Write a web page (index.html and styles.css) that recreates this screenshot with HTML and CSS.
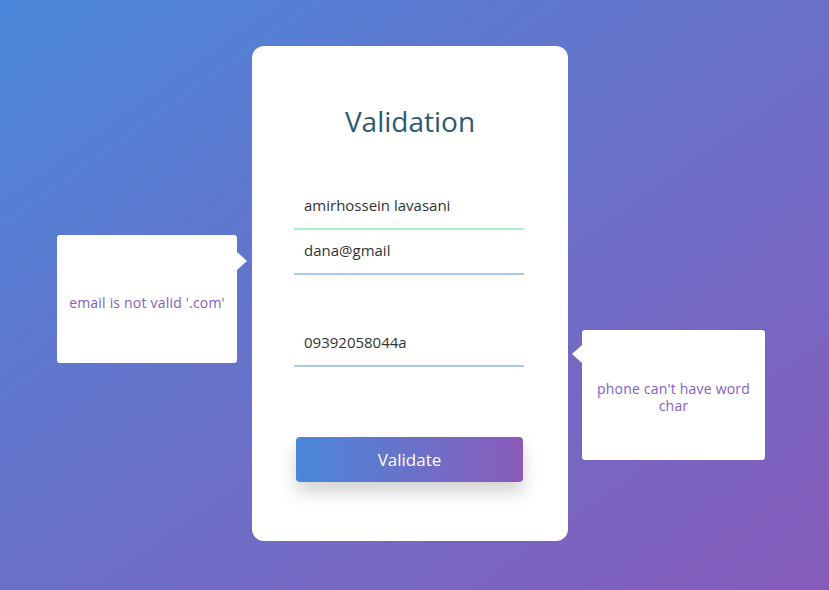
FILE: index.html
```html
<!DOCTYPE html>
<html lang="en">
<head>
<meta charset="utf-8">
<title>Validation</title>
<link rel="stylesheet" href="styles.css">
</head>
<body>
<main class="page">
  <form class="card">
    <h1 class="title">Validation</h1>
    <input class="field field-ok" type="text" value="amirhossein lavasani">
    <input class="field field-email" type="text" value="dana@gmail">
    <input class="field field-phone" type="text" value="09392058044a">
    <button class="btn" type="button">Validate</button>
    <div class="tip tip-left">email is not valid '.com'</div>
    <div class="tip tip-right">phone can't have word char</div>
  </form>
</main>
</body>
</html>
```

FILE: styles.css
```css
* { box-sizing: border-box; }
html, body { margin: 0; padding: 0; }
body {
  width: 829px;
  height: 590px;
  overflow: hidden;
  font-family: "Open Sans", "DejaVu Sans", sans-serif;
}
.page {
  width: 829px;
  height: 590px;
  background: linear-gradient(to bottom right, #4a87da 0%, #6a70c8 50%, #865bbb 100%);
  display: flex;
  align-items: flex-start;
  justify-content: flex-start;
  padding: 46px 0 0 252px;
}
.card {
  position: relative;
  width: 316px;
  height: 495px;
  background: #fff;
  border-radius: 12px;
  padding: 58px 0 0 42px;
  display: flex;
  flex-direction: column;
  align-items: flex-start;
}
.title {
  margin: 0;
  width: 232px;
  text-align: center;
  font-size: 28px;
  line-height: 34px;
  font-weight: 400;
  color: #2d5872;
}
.field {
  width: 230px;
  height: 42px;
  border: 0;
  border-bottom: 2px solid #a9caee;
  padding: 0 10px 6px;
  font-family: inherit;
  font-size: 15px;
  color: #333;
  outline: none;
  background: transparent;
}
.field-ok { margin-top: 50px; border-bottom-color: #aeeec4; }
.field-email { margin-top: 3px; }
.field-phone { margin-top: 50px; }
.btn {
  margin: 70px 0 0 2px;
  width: 227px;
  height: 45px;
  border: 0;
  border-radius: 4px;
  background: linear-gradient(to right, #4a87da, #8a5bb9);
  color: #fff;
  font-family: inherit;
  font-size: 17px;
  box-shadow: 0 10px 18px rgba(0, 0, 0, 0.18);
}
.tip {
  position: absolute;
  background: #fff;
  border-radius: 3px;
  color: #7f61c2;
  font-size: 14px;
  letter-spacing: 0.2px;
  line-height: 17px;
  display: flex;
  align-items: center;
  justify-content: center;
  text-align: center;
  padding: 0 12px;
}
.tip::after {
  content: "";
  position: absolute;
  width: 0;
  height: 0;
  border-top: 9px solid transparent;
  border-bottom: 9px solid transparent;
}
.tip-left {
  left: -195px;
  top: 189px;
  width: 180px;
  height: 128px;
  padding-top: 6px;
}
.tip-left::after {
  right: -10px;
  top: 17px;
  border-left: 10px solid #fff;
}
.tip-right {
  left: 330px;
  top: 284px;
  width: 183px;
  height: 130px;
  padding: 3px 12px 0;
}
.tip-right::after {
  left: -10px;
  top: 15px;
  border-right: 10px solid #fff;
}
```
